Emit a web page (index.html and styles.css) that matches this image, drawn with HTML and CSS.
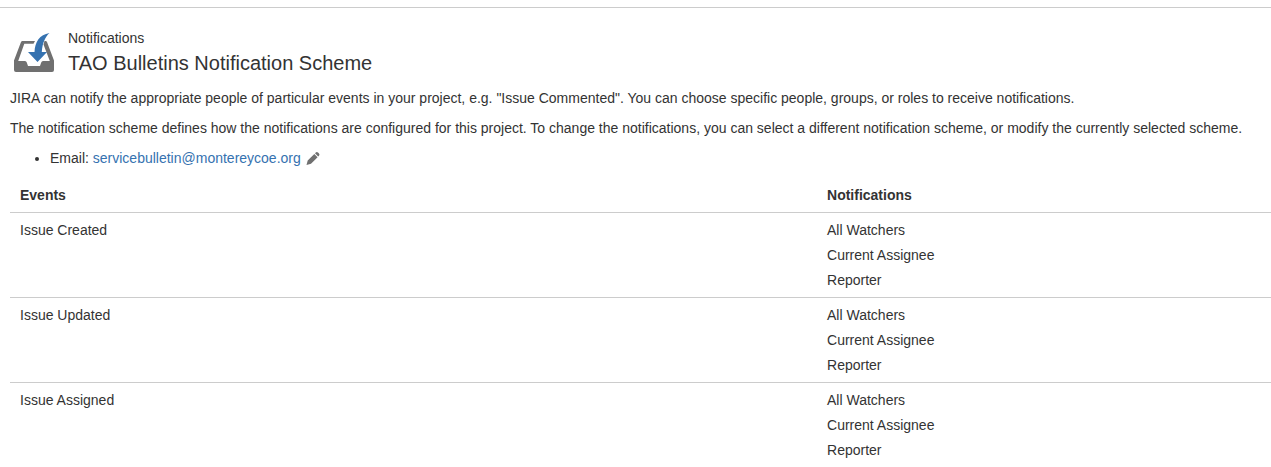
FILE: index.html
```html
<!DOCTYPE html>
<html lang="en">
<head>
    <meta charset="UTF-8">
    <meta name="viewport" content="width=device-width, initial-scale=1.0">
    <title>TAO Bulletins Notification Scheme</title>
    <link rel="stylesheet" href="styles.css">
</head>
<body>
    <main class="panel">
        <header class="page-header">
            <svg class="header-icon" viewBox="0 0 48 48" aria-hidden="true">
                <path class="tray" d="M12.5 13H25l-1.5 2.800H14.300L8.200 33H15q1.300 0 1.800 1.500L18 38h12l1.200-3.500Q31.700 33 33 33h6.800L33.500 16.500 34.500 13h1q1.100 0 1.600 1.300L44 32.500V42q0 2-2 2H6q-2 0-2-2v-9.500l6.900-18.200Q11.400 13 12.500 13z"/>
                <path class="arrow" d="M39.500 5C35 9 32.500 15 31.800 24H37l-9.500 10L18 24h6.500C25 13.500 29.500 7 39.500 5z"/>
            </svg>
            <div class="header-text">
                <div class="breadcrumb">Notifications</div>
                <h1>TAO Bulletins Notification Scheme</h1>
            </div>
        </header>

        <p>JIRA can notify the appropriate people of particular events in your project, e.g. "Issue Commented". You can choose specific people, groups, or roles to receive notifications.</p>
        <p>The notification scheme defines how the notifications are configured for this project. To change the notifications, you can select a different notification scheme, or modify the currently selected scheme.</p>

        <ul class="settings">
            <li>Email: <a href="mailto:servicebulletin@montereycoe.org">servicebulletin@montereycoe.org</a>
                <button type="button" class="edit-button" aria-label="Edit email">
                    <svg viewBox="0 0 16 16"><path d="M1.500 15l1.200-4.500L9.300 4l3.300 3.200L6 13.700zM10 3.300l.8-.8q1-1 2.200 0l1 1q1 1.200 0 2.200l-.8.8z"/></svg>
                </button>
            </li>
        </ul>

        <table class="events">
            <thead>
                <tr>
                    <th class="event-col">Events</th>
                    <th>Notifications</th>
                </tr>
            </thead>
            <tbody>
                <tr>
                    <td>Issue Created</td>
                    <td>
                        <ul>
                            <li>All Watchers</li>
                            <li>Current Assignee</li>
                            <li>Reporter</li>
                        </ul>
                    </td>
                </tr>
                <tr>
                    <td>Issue Updated</td>
                    <td>
                        <ul>
                            <li>All Watchers</li>
                            <li>Current Assignee</li>
                            <li>Reporter</li>
                        </ul>
                    </td>
                </tr>
                <tr>
                    <td>Issue Assigned</td>
                    <td>
                        <ul>
                            <li>All Watchers</li>
                            <li>Current Assignee</li>
                            <li>Reporter</li>
                        </ul>
                    </td>
                </tr>
            </tbody>
        </table>
    </main>
</body>
</html>
```
FILE: styles.css
```css
* {
    box-sizing: border-box;
    margin: 0;
    padding: 0;
}

body {
    font-family: "Liberation Sans", Arial, sans-serif;
    font-size: 14px;
    line-height: 20px;
    color: #333;
    background: #fff;
    padding-top: 7px;
}

.panel {
    border-top: 1px solid #ccc;
    padding: 20px 0 0 10px;
}

.page-header {
    display: flex;
    gap: 10px;
    margin-bottom: 10px;
}

.header-icon {
    width: 48px;
    height: 48px;
}

.tray {
    fill: #707070;
}

.arrow {
    fill: #3572b0;
}

h1 {
    font-size: 20px;
    font-weight: normal;
    line-height: 30px;
}

p {
    margin-bottom: 10px;
}

a {
    color: #3572b0;
    text-decoration: none;
}

a:hover {
    text-decoration: underline;
}

.settings {
    padding-left: 40px;
    margin-bottom: 10px;
}

.edit-button {
    width: 16px;
    height: 16px;
    border: none;
    background: none;
    vertical-align: text-bottom;
    cursor: pointer;
}

.edit-button svg {
    display: block;
    fill: #707070;
}

.events {
    width: 100%;
    border-collapse: collapse;
    table-layout: fixed;
}

.events th,
.events td {
    padding: 7px 10px;
    border-bottom: 1px solid #ccc;
    text-align: left;
    vertical-align: top;
}

.event-col {
    width: 64%;
}

.events ul {
    list-style: none;
}

.events li + li {
    margin-top: 5px;
}
```
